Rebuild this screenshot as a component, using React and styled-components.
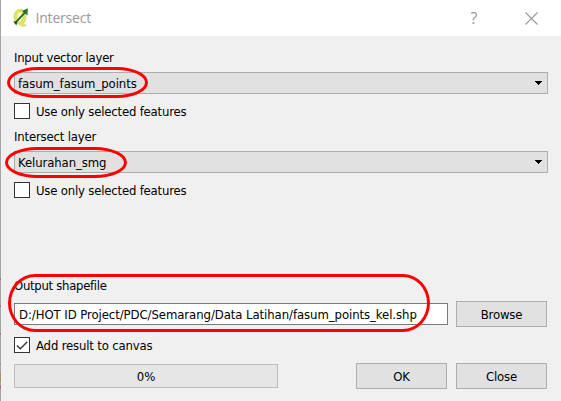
import React from 'react';
import styled, { createGlobalStyle } from 'styled-components';

const GlobalStyle = createGlobalStyle`
  * { box-sizing: border-box; }
  body { margin: 0; background: #f0f0f0; overflow: hidden; }
`;

const Dialog = styled.main`
  position: relative;
  width: 561px;
  height: 401px;
  display: flex;
  flex-direction: column;
  background: #f0f0f0;
  border-left: 1px solid #a5a5a5;
  font: 13px/16px "DejaVu Sans Condensed", "DejaVu Sans", sans-serif;
  font-stretch: condensed;
  color: #000;
`;

const TitleBar = styled.header`
  height: 36px;
  display: flex;
  align-items: center;
  padding: 0 23px 0 11px;
  background: #fff;
  color: #999;
`;

const Title = styled.h1`
  flex: 1;
  margin: 0 0 0 5.5px;
  font: 400 14px/20px "Open Sans", sans-serif;
  letter-spacing: -0.2px;
`;

const Help = styled.span`
  width: 10px;
  margin-right: 46px;
  font: 16px/20px "Open Sans", sans-serif;
  text-align: center;
`;

const Form = styled.section`
  display: flex;
  flex-direction: column;
  padding: 14px 13px 0;
`;

const Text = styled.span`
  white-space: pre;
  letter-spacing: ${p => p.$track || 0}px;
`;

const Field = styled.div`
  display: flex;
  flex-direction: column;
  height: ${p => p.$height}px;
`;

const Label = styled.label`
  height: 22px;
`;

const Combo = styled.div`
  height: 22px;
  display: flex;
  align-items: center;
  justify-content: space-between;
  padding: 0 4px 0 3px;
  border: 1px solid #adadad;
  background: #e1e1e1;

  ${Text} {
    padding-top: 1px;
  }
`;

const Check = styled.div`
  display: flex;
  align-items: center;
  gap: 6px;
  height: 16px;
  margin-top: ${p => p.$top}px;

  ${Text} {
    padding-top: 1px;
  }
`;

const Box = styled.span`
  width: 16px;
  height: 16px;
  display: flex;
  background: #fff;
  border: 1px solid #333;
`;

const Row = styled.div`
  display: flex;
  align-items: center;
  height: 26px;
  margin-top: ${p => p.$top || 0}px;
`;

const PathInput = styled.div`
  width: 434px;
  height: 22px;
  margin-right: 8px;
  padding: 3px 4px 0;
  line-height: 16px;
  background: #fff;
  border: 1px solid #7a7a7a;
`;

const Button = styled.button`
  width: 91px;
  height: 26px;
  margin: 0 ${p => p.$gap || 0}px 0 0;
  padding: 1px 0 0;
  border: 1px solid #adadad;
  background: #e1e1e1;
  color: #000;
  font: inherit;
`;

const Progress = styled.div`
  width: 264px;
  height: 24px;
  margin-right: 78px;
  border: 1px solid #bcbcbc;
  background: #e6e6e6;
  line-height: 23px;
  text-align: center;
`;

const Highlight = styled.div`
  position: absolute;
  left: ${p => p.$x}px;
  top: ${p => p.$y}px;
  width: ${p => p.$w}px;
  height: ${p => p.$h}px;
  border: 3px solid #ff0000;
  border-radius: ${p => p.$r};
`;

const EdgeMark = styled.i`
  position: absolute;
  left: -1px;
  top: ${p => p.$y}px;
  width: 1px;
  height: ${p => p.$h}px;
  background: ${p => p.$c};
`;

const Logo = () => (
  <svg width="18" height="20" viewBox="0 0 18 20">
    <path d="M8 1.300C4.500 1.500 2 4.800 2 8.800c0 4 1.800 6.800 4.800 7.200 2 2.400 5.400 3 7.700 1.200-1.600.2-2.500-.5-3.200-1.700C13.200 13.800 14 11 13.700 7.500 13.400 3.500 11 1 8 1.300Z" fill="#dfe65c" stroke="#c5cc58" strokeWidth=".6" />
    <path d="M8.300 4C6 4.300 5.200 6.500 5.300 9.300c.1 2.800 1 4.200 2.300 4.100 1.800-.2 2.700-2.700 2.600-5.400C10.100 5.500 9.500 3.900 8.300 4Z" fill="#f6f7cc" />
    <path d="m3.500 14.700 9.800-10.600" stroke="#1f6a2b" strokeWidth="1.800" />
    <path d="m10 3 5.800-2.700-.3 7.200-2.300-2Z" fill="#217330" />
    <path d="m1.300 13.600 2.600-.2 1.200 1.200-.7 2.800Z" fill="#164c24" />
  </svg>
);

const Arrow = () => (
  <svg width="9" height="5" viewBox="0 0 9 5" shapeRendering="crispEdges">
    <path d="M1 0h7v1H1zM2 1h5v1H2zM3 2h3v1H3zM4 3h1v1H4z" />
  </svg>
);

const Option = ({ label, track, top, checked }) => (
  <Check $top={top}>
    <Box>
      {checked && (
        <svg width="14" height="14" viewBox="0 0 14 14">
          <path d="m2 7.500 3.300 3.300L12.300 3.700" fill="none" stroke="#333" strokeWidth="1.300" />
        </svg>
      )}
    </Box>
    <Text $track={track}>{label}</Text>
  </Check>
);

export default function App() {
  return (
    <Dialog>
      <GlobalStyle />
      <TitleBar>
        <Logo />
        <Title>Intersect</Title>
        <Help>?</Help>
        <svg width="13" height="13" viewBox="0 0 13 13">
          <path d="m.5.500 12 12m0-12-12 12" stroke="#999" strokeWidth="1.100" />
        </svg>
      </TitleBar>
      <Form>
        <Field $height={79}>
          <Label><Text $track={-0.25}>Input vector layer</Text></Label>
          <Combo><Text $track={-0.07}>fasum_fasum_points</Text><Arrow /></Combo>
          <Option label="Use only selected features" track={-0.19} top={9} />
        </Field>
        <Field $height={149}>
          <Label><Text $track={-0.18}>Intersect layer</Text></Label>
          <Combo><Text $track={-0.1}>Kelurahan_smg</Text><Arrow /></Combo>
          <Option label="Use only selected features" track={-0.19} top={9} />
        </Field>
        <Field $height={75}>
          <Label><Text $track={-0.3}>Output shapefile</Text></Label>
          <Row $top={1}>
            <PathInput><Text $track={-0.07}>D:/HOT ID Project/PDC/Semarang/Data Latihan/fasum_points_kel.shp</Text></PathInput>
            <Button><Text $track={-0.15}>Browse</Text></Button>
          </Row>
          <Option label="Add result to canvas" track={-0.16} top={10} checked />
        </Field>
        <Row $top={10}>
          <Progress>0%</Progress>
          <Button $gap={9}><Text $track={-0.3}>OK</Text></Button>
          <Button><Text $track={-0.2}>Close</Text></Button>
        </Row>
      </Form>
      <Highlight $x={6} $y={67} $w={141} $h={31} $r="31px / 15.5px" />
      <Highlight $x={4} $y={147} $w={122} $h={31} $r="32px / 15.5px" />
      <Highlight $x={7} $y={274} $w={422} $h={58} $r="27px / 29px" />
      <EdgeMark $y={278} $h={2} $c="#b66a6a" />
      <EdgeMark $y={305} $h={2} $c="#b66a6a" />
      <EdgeMark $y={333} $h={2} $c="#b66a6a" />
      <EdgeMark $y={363} $h={1} $c="#b66a6a" />
      <EdgeMark $y={373} $h={9} $c="#a8935c" />
      <EdgeMark $y={385} $h={4} $c="#b66a6a" />
    </Dialog>
  );
}
